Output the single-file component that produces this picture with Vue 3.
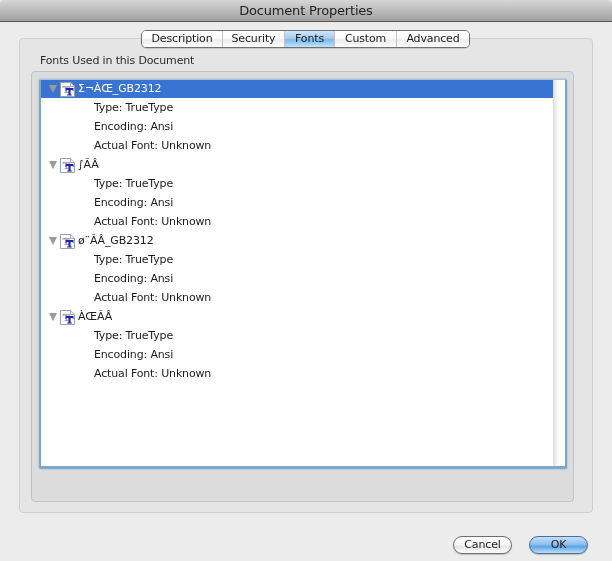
<script setup>
const tabs = [
  { label: 'Description', width: 81 },
  { label: 'Security', width: 62 },
  { label: 'Fonts', width: 50, active: true },
  { label: 'Custom', width: 62 },
  { label: 'Advanced', width: 72 }
]
const fonts = [
  { name: 'Σ¬ÀŒ_GB2312', selected: true },
  { name: '∫ÃÂ' },
  { name: 'ø¨ÃÂ_GB2312' },
  { name: 'ÀŒÃÂ' }
]
const details = ['Type: TrueType', 'Encoding: Ansi', 'Actual Font: Unknown']
</script>

<template>
  <div class="dialog">
    <header class="titlebar">Document Properties</header>
    <main class="content">
      <nav class="tabs">
        <span
          v-for="tab in tabs"
          :key="tab.label"
          class="tab"
          :class="{ active: tab.active }"
          :style="{ width: tab.width + 'px' }"
        >{{ tab.label }}</span>
      </nav>
      <section class="outer">
        <h2 class="label">Fonts Used in this Document</h2>
        <div class="inner">
          <div class="list">
            <div class="rows">
              <div v-for="font in fonts" :key="font.name" class="group">
                <div class="row font-row" :class="{ selected: font.selected }">
                  <span class="triangle"></span>
                  <svg class="icon" width="15" height="15" viewBox="0 0 15 15">
                    <path d="M.5.5H10.5L14.5 4.5V14.5H.5Z" fill="#fff" stroke="#98a0ae" />
                    <path d="M10.5.5V4.5H14.5" fill="#ececec" stroke="#b0b0b0" />
                    <path d="M2.5 4H10V5.8H9.3V5.4H7.2V10H8.2V11H4.6V10H5.6V5.4H3.2V5.8H2.5Z" fill="#9aa0c8" />
                    <path d="M5.5 6H13.5V9H12.7V8H10.6V12.5H11.8V13.5H7.2V12.5H8.4V8H6.3V9H5.5Z" fill="#2020b4" />
                  </svg>
                  <span class="name">{{ font.name }}</span>
                </div>
                <div v-for="detail in details" :key="detail" class="row detail">{{ detail }}</div>
              </div>
            </div>
            <div class="scrollbar"></div>
          </div>
        </div>
      </section>
    </main>
    <footer class="actions">
      <button class="btn">Cancel</button>
      <button class="btn primary">OK</button>
    </footer>
  </div>
</template>

<style>
html, body {
  margin: 0;
  background: #ececec;
}
</style>

<style scoped>
.dialog {
  width: 612px;
  height: 561px;
  display: flex;
  flex-direction: column;
  overflow: hidden;
  background: #ececec;
  font-family: "DejaVu Sans", sans-serif;
  color: #1c1c1c;
  font-size: 11px;
  letter-spacing: -0.15px;
  filter: blur(0.3px);
}
.titlebar {
  box-sizing: border-box;
  height: 22px;
  flex: none;
  border-bottom: 1px solid #565656;
  border-radius: 4px 4px 0 0;
  background: linear-gradient(#d6d6d6, #a0a0a0);
  font-size: 13px;
  letter-spacing: -0.2px;
  line-height: 21px;
  text-align: center;
  color: #222;
}
.content {
  position: relative;
  flex: none;
  padding: 16px 19px 0;
}
.tabs {
  position: absolute;
  top: 8px;
  left: 141px;
  display: flex;
  height: 18px;
  box-sizing: border-box;
  border: 1px solid #707070;
  border-radius: 5px;
  background: #fff;
  overflow: hidden;
  box-shadow: 0 1px 1px rgba(0, 0, 0, .15);
}
.tab {
  box-sizing: border-box;
  flex: none;
  border-right: 1px solid #c4c4c4;
  background: linear-gradient(#fff 0, #fbfbfb 45%, #ececec 55%, #fdfdfd 100%);
  text-align: center;
  line-height: 16px;
}
.tab:last-child {
  border-right: 0;
}
.tab.active {
  background: linear-gradient(#d2e6f8 0, #a3cdf2 45%, #7db8ec 55%, #c2e3fb 100%);
}
.outer {
  box-sizing: border-box;
  width: 574px;
  height: 475px;
  border: 1px solid #d0d0d0;
  border-radius: 4px;
  background: #e5e5e5;
  padding: 14px 11px 0;
}
.label {
  margin: 0 0 2px 9px;
  font-size: 11px;
  font-weight: 400;
  line-height: 16px;
  color: #2a2a2a;
}
.inner {
  box-sizing: border-box;
  width: 543px;
  height: 431px;
  border: 1px solid #c2c2c2;
  border-radius: 4px;
  background: #dcdcdc;
  padding: 7px 7px 0;
}
.list {
  box-sizing: border-box;
  width: 528px;
  height: 390px;
  display: flex;
  border: 2px solid #7aa9d0;
  border-top: 1px solid #a9c8e0;
  border-bottom-width: 3px;
  box-shadow: 0 0 2px #7aa9d0;
  border-radius: 2px;
  background: #fff;
}
.rows {
  flex: 1;
  min-width: 0;
}
.scrollbar {
  width: 12px;
  flex: none;
  background: linear-gradient(90deg, #dedede, #fff 50%);
}
.row {
  height: 19px;
  line-height: 19px;
  white-space: nowrap;
}
.font-row {
  display: flex;
  align-items: center;
}
.font-row.selected {
  height: 18px;
  line-height: 18px;
  background: #3a74d2;
  color: #fff;
}
.triangle {
  width: 0;
  height: 0;
  margin: 0 3px 0 8px;
  border-left: 4.5px solid transparent;
  border-right: 4.5px solid transparent;
  border-top: 8px solid #9b9b9b;
}
.icon {
  flex: none;
  margin-top: 1px;
}
.name {
  margin-left: 3px;
}
.detail {
  padding-left: 53px;
}
.actions {
  flex: none;
  display: flex;
  justify-content: flex-end;
  gap: 17px;
  padding: 23px 24px 0 0;
}
.btn {
  box-sizing: border-box;
  width: 59px;
  height: 18px;
  padding: 0;
  border: 1px solid #6e6e6e;
  border-radius: 9px;
  background: linear-gradient(#fff 0, #f8f8f8 45%, #e6e6e6 60%, #fdfdfd 100%);
  box-shadow: 0 1px 1px rgba(0, 0, 0, .2);
  font: inherit;
  letter-spacing: inherit;
  line-height: 16px;
  color: #1c1c1c;
}
.btn.primary {
  border-color: #4a6f9c;
  background: linear-gradient(#c4dff6 0, #8cc1ee 45%, #5ea4e2 60%, #bde0fa 100%);
}
</style>
